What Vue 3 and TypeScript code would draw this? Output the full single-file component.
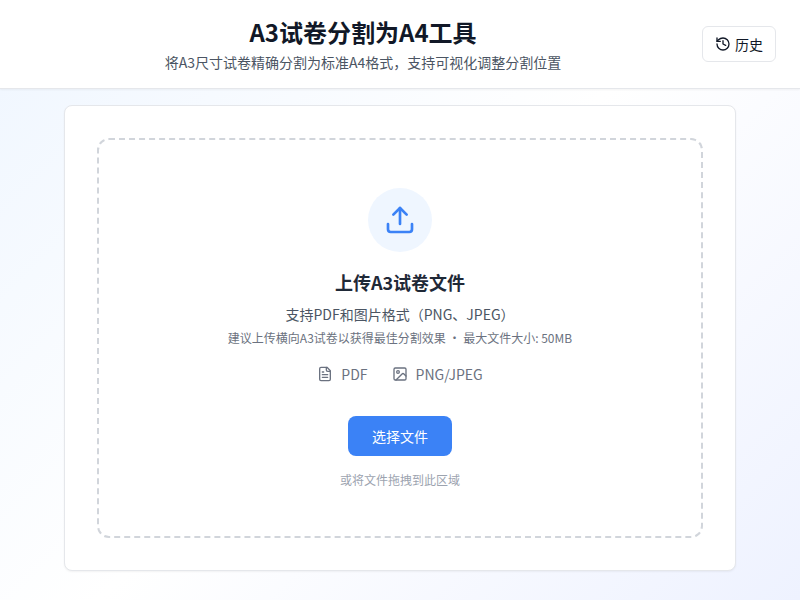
<script setup lang="ts">
const formats: { label: string; icon: 'file' | 'image' }[] = [
  { label: 'PDF', icon: 'file' },
  { label: 'PNG/JPEG', icon: 'image' },
]
</script>

<template>
  <div class="page">
    <header class="header">
      <div class="titles">
        <h1 class="title">A3试卷分割为A4工具</h1>
        <p class="subtitle">将A3尺寸试卷精确分割为标准A4格式，支持可视化调整分割位置</p>
      </div>
      <button class="history" type="button">
        <svg class="history-icon" viewBox="0 0 24 24" fill="none" stroke="currentColor" stroke-width="2" stroke-linecap="round" stroke-linejoin="round">
          <path d="M3 12a9 9 0 1 0 9-9 9.75 9.75 0 0 0-6.74 2.74L3 8" />
          <path d="M3 3v5h5" />
          <path d="M12 7v5l4 2" />
        </svg>
        <span>历史</span>
      </button>
    </header>
    <main class="main">
      <section class="card">
        <div class="drop">
          <div class="circle">
            <svg class="upload-icon" viewBox="0 0 24 24" fill="none" stroke="currentColor" stroke-width="2" stroke-linecap="round" stroke-linejoin="round">
              <path d="M21 15v4a2 2 0 0 1-2 2H5a2 2 0 0 1-2-2v-4" />
              <path d="M17 8l-5-5-5 5" />
              <path d="M12 3v12" />
            </svg>
          </div>
          <h2 class="heading">上传A3试卷文件</h2>
          <p class="support">支持PDF和图片格式（PNG、JPEG）</p>
          <p class="hint">建议上传横向A3试卷以获得最佳分割效果 • 最大文件大小: 50MB</p>
          <ul class="formats">
            <li v-for="f in formats" :key="f.label" class="format">
              <svg v-if="f.icon === 'file'" class="format-icon" viewBox="0 0 24 24" fill="none" stroke="currentColor" stroke-width="2" stroke-linecap="round" stroke-linejoin="round">
                <path d="M15 2H6a2 2 0 0 0-2 2v16a2 2 0 0 0 2 2h12a2 2 0 0 0 2-2V7Z" />
                <path d="M14 2v4a2 2 0 0 0 2 2h4" />
                <path d="M10 9H8" />
                <path d="M16 13H8" />
                <path d="M16 17H8" />
              </svg>
              <svg v-else class="format-icon" viewBox="0 0 24 24" fill="none" stroke="currentColor" stroke-width="2" stroke-linecap="round" stroke-linejoin="round">
                <rect x="3" y="3" width="18" height="18" rx="2" ry="2" />
                <circle cx="9" cy="9" r="2" />
                <path d="m21 15-3.086-3.086a2 2 0 0 0-2.828 0L6 21" />
              </svg>
              <span>{{ f.label }}</span>
            </li>
          </ul>
          <button class="choose" type="button">选择文件</button>
          <p class="drag">或将文件拖拽到此区域</p>
        </div>
      </section>
    </main>
  </div>
</template>

<style>
html, body {
  margin: 0;
  padding: 0;
}
</style>

<style scoped>
.page {
  width: 800px;
  height: 600px;
  overflow: hidden;
  display: flex;
  flex-direction: column;
  background: linear-gradient(135deg, #eff6ff 0%, #ffffff 50%, #eef2ff 100%);
  font-family: "Noto Sans CJK SC", "Noto Sans", sans-serif;
}
.header {
  position: relative;
  box-sizing: border-box;
  height: 89px;
  flex: none;
  display: flex;
  align-items: center;
  justify-content: center;
  background: #fff;
  border-bottom: 1px solid #e5e7eb;
  box-shadow: 0 1px 2px rgba(0, 0, 0, 0.05);
}
.titles {
  text-align: center;
  margin-right: 74px;
}
.title {
  margin: 0;
  font-size: 24px;
  line-height: 32px;
  font-weight: 700;
  color: #111827;
}
.subtitle {
  margin: 4px 0 0;
  font-size: 14px;
  line-height: 20px;
  color: #4b5563;
}
.history {
  position: absolute;
  right: 24px;
  top: 26px;
  box-sizing: border-box;
  width: 74px;
  height: 36px;
  display: flex;
  align-items: center;
  justify-content: center;
  gap: 4px;
  padding: 0;
  background: #fff;
  border: 1px solid #e5e7eb;
  border-radius: 6px;
  font-family: inherit;
  font-size: 14px;
  color: #111827;
}
.history-icon {
  width: 16px;
  height: 16px;
}
.main {
  flex: 1;
  display: flex;
  justify-content: center;
  padding-top: 16px;
}
.card {
  box-sizing: border-box;
  width: 672px;
  height: 466px;
  padding: 32px;
  background: #fff;
  border: 1px solid #e5e7eb;
  border-radius: 8px;
  box-shadow: 0 1px 2px rgba(0, 0, 0, 0.05);
}
.drop {
  box-sizing: border-box;
  height: 100%;
  display: flex;
  flex-direction: column;
  align-items: center;
  padding-top: 48px;
  border: 2px dashed #d1d5db;
  border-radius: 12px;
}
.circle {
  width: 64px;
  height: 64px;
  border-radius: 50%;
  display: flex;
  align-items: center;
  justify-content: center;
  background: #eff6ff;
  color: #3b82f6;
}
.upload-icon {
  width: 32px;
  height: 32px;
}
.heading {
  margin: 16px 0 0;
  font-size: 18px;
  line-height: 28px;
  font-weight: 700;
  color: #1f2937;
}
.support {
  margin: 8px 0 0;
  font-size: 14px;
  line-height: 20px;
  color: #4b5563;
}
.hint {
  margin: 6px 0 0;
  font-size: 12px;
  line-height: 16px;
  color: #6b7280;
}
.formats {
  list-style: none;
  margin: 18px 0 0;
  padding: 0;
  display: flex;
  gap: 24px;
}
.format {
  display: flex;
  align-items: center;
  gap: 8px;
  font-size: 14px;
  line-height: 20px;
  color: #6b7280;
}
.format-icon {
  width: 16px;
  height: 16px;
}
.choose {
  margin-top: 32px;
  width: 104px;
  height: 40px;
  border: none;
  border-radius: 8px;
  background: #3b82f6;
  color: #fff;
  font-family: inherit;
  font-size: 14px;
}
.drag {
  margin: 16px 0 0;
  font-size: 12px;
  line-height: 16px;
  color: #9ca3af;
}
</style>
